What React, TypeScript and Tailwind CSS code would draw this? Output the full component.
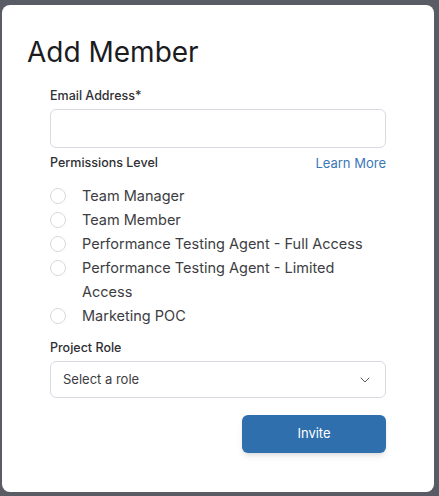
import { ChevronDown } from 'lucide-react'

const roles = [
  'Team Manager',
  'Team Member',
  'Performance Testing Agent - Full Access',
  'Performance Testing Agent - Limited Access',
  'Marketing POC',
]

export default function App() {
  return (
    <div
      className="w-[439px] h-[496px] bg-[#595c64] overflow-hidden pt-[5px] pl-[2px]"
      style={{ fontFamily: 'Inter, Lato, sans-serif' }}
    >
      <div className="w-[432px] h-[487px] rounded-lg bg-white pt-[29px] pl-[25px]">
        <h1 className="text-[28px] leading-[36px] text-[#1c1c1f]">Add Member</h1>

        <div className="ml-[23px] w-[336px] mt-[16px]">
          {/* Email */}
          <label className="block text-[12.5px] leading-[20px] font-medium text-[#2f2f34]">
            Email Address*
          </label>
          <input
            type="email"
            className="mt-[3px] block w-full h-[39px] rounded-md border border-[#d9dbe2] px-3 text-sm outline-none"
          />

          {/* Permissions */}
          <div className="mt-[5px] flex items-center justify-between leading-[20px]">
            <span className="text-[12.5px] font-medium text-[#2f2f34]">Permissions Level</span>
            <a className="text-[13px] text-[#3a78b6]">Learn More</a>
          </div>

          <div className="mt-[11px] flex flex-col">
            {roles.map((role) => (
              <label key={role} className="flex items-start">
                <span className="mt-[4px] w-4 h-4 shrink-0 rounded-full border border-[#d7d9df]" />
                <span className="ml-4 w-[298px] text-[14.5px] leading-[24px] text-[#3d3d42]">{role}</span>
              </label>
            ))}
          </div>

          {/* Project role */}
          <label className="mt-[10px] block text-[12.5px] leading-[20px] font-medium text-[#2f2f34]">
            Project Role
          </label>
          <div className="mt-[3px] h-[37px] rounded-md border border-[#d9dbe2] flex items-center justify-between pl-[12px] pr-[12px]">
            <span className="text-[13px] text-[#3d3d42]">Select a role</span>
            <ChevronDown size={16} strokeWidth={1.5} className="text-[#55575e]" />
          </div>

          <div className="mt-[17px] flex justify-end">
            <button className="w-[144px] h-[38px] rounded-md bg-[#2f6fae] text-white text-[13px] shadow-md">
              Invite
            </button>
          </div>
        </div>
      </div>
    </div>
  )
}
